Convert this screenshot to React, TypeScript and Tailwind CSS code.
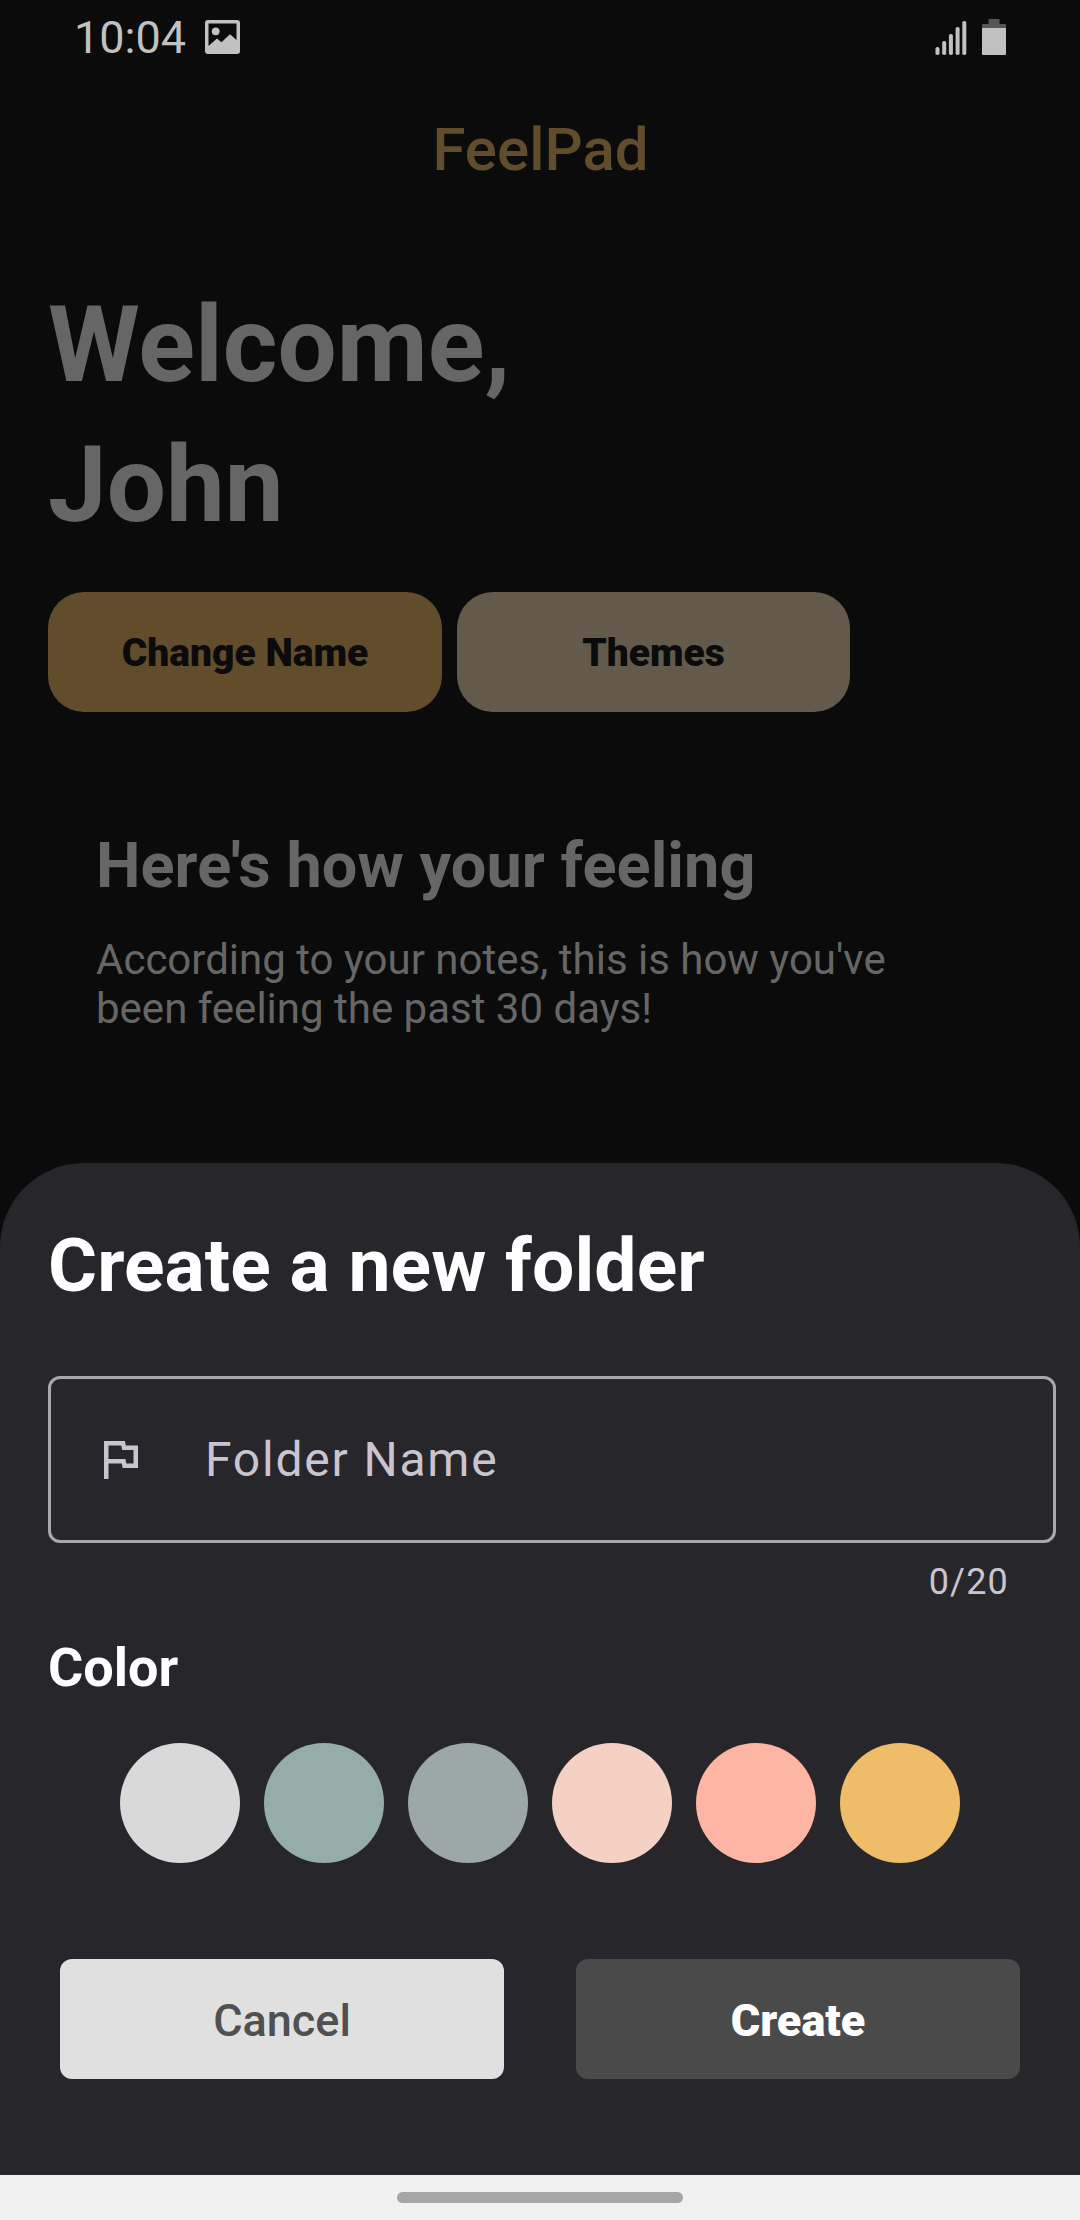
const swatches = [
  "bg-[#d9d9d9]",
  "bg-[#94aea7]",
  "bg-[#9ca7a8]",
  "bg-[#f4d1c3]",
  "bg-[#ffb5a3]",
  "bg-[#efbc68]",
];

function StatusBar() {
  return (
    <header className="flex h-[89px] items-start justify-between pl-[74px] pr-[74px] pt-[11px] text-[#c1c1c1]">
      <div className="flex items-start">
        <span className="text-[45px] leading-[54px]">10:04</span>
        <svg className="ml-[19px] mt-[9px]" width="35" height="34" viewBox="0 0 35 34">
          <path
            fill="currentColor"
            fillRule="evenodd"
            d="M3 0h29q3 0 3 3v28q0 3-3 3H3q-3 0-3-3V3q0-3 3-3zM3.500 3.500V26l8.500-7.500 4.500 3.700L25 14.200l6.500 5.800V3.500z"
          />
          <circle cx="10.700" cy="11.300" r="3.900" fill="currentColor" />
        </svg>
      </div>
      <div className="flex gap-[15px] pt-[8px]">
        <svg width="32" height="36" viewBox="0 0 32 36" fill="currentColor">
          <rect x="0.500" y="28" width="4" height="8" rx="1.800" />
          <rect x="7.200" y="22" width="4" height="14" rx="1.800" />
          <rect x="13.900" y="15" width="4" height="21" rx="1.800" />
          <rect x="20.600" y="8" width="4" height="28" rx="1.800" />
          <rect x="27.300" y="2" width="4" height="34" rx="1.800" />
        </svg>
        <svg width="24" height="36" viewBox="0 0 24 36">
          <path fill="#565656" d="M6.500 0h11v5H23q1 0 1 1v3H0V6q0-1 1-1h5.500z" />
          <path fill="currentColor" d="M0 9h24v26q0 1-1 1H1q-1 0-1-1z" />
        </svg>
      </div>
    </header>
  );
}

function Sheet() {
  return (
    <section className="absolute inset-x-0 bottom-[45px] flex h-[1012px] flex-col rounded-t-[84px] bg-[#27262b] pl-[48px] text-white">
      <h2 className="mt-[57px] text-[75px] font-bold leading-[90px] tracking-[0.080px]">Create a new folder</h2>
      <div className="mr-[24px] mt-[66px] flex h-[167px] shrink-0 items-center rounded-[12px] border-[3px] border-[#a8a8a8] pl-[53px] text-[#cac4d0]">
        <svg width="34" height="38" viewBox="0 0 34 38" fill="none" stroke="currentColor" strokeWidth="4.500">
          <path d="M2.250 38V2.250h16.800l.9 4.500h11.800v18H20.500l-.9-4.500H2.250" />
        </svg>
        <span className="ml-[67px] text-[48px] leading-[56px] tracking-[1.800px]">Folder Name</span>
      </div>
      <p className="mr-[71px] mt-[18px] text-right text-[36px] leading-[42px] tracking-[1.200px] text-[#cac4d0]">0/20</p>
      <h3 className="mt-[33px] text-[54px] font-bold leading-[64px]">Color</h3>
      <div className="ml-[72px] mt-[43px] flex gap-6">
        {swatches.map((color) => (
          <button key={color} className={`size-[120px] rounded-full ${color}`} />
        ))}
      </div>
      <div className="ml-3 mt-24 flex gap-[72px] text-[45px]">
        <button className="h-[120px] w-[444px] rounded-[12px] bg-[#e0e0e0] pt-[3px] font-medium text-[#505050]">Cancel</button>
        <button className="h-[120px] w-[444px] rounded-[12px] bg-[#4a4a4a] pt-[3px] font-black">Create</button>
      </div>
    </section>
  );
}

export default function App() {
  return (
    <div className="relative flex h-[2220px] w-[1080px] flex-col overflow-hidden bg-[#0b0b0b] font-['Roboto',sans-serif]">
      <StatusBar />
      <h1 className="mt-[25px] pl-px text-center text-[60px] font-medium leading-[72px] text-[#614c2b]">FeelPad</h1>
      <main className="px-[48px] pt-[90px] text-[#666666]">
        <h2 className="text-[105px] font-bold leading-[140px]">
          Welcome,
          <br />
          John
        </h2>
        <div className="mt-[36px] flex gap-[15px] text-[39px] font-black text-[#0b0b0b]">
          <button className="h-[120px] w-[394px] rounded-[36px] bg-[#614c2b] pt-[3px]">Change Name</button>
          <button className="h-[120px] w-[393px] rounded-[36px] bg-[#635a4b] pt-[3px]">Themes</button>
        </div>
        <div className="px-[48px] pt-[116px]">
          <h3 className="text-[63px] font-bold leading-[76px] tracking-[0.060px]">Here's how your feeling</h3>
          <p className="mt-[31px] text-[42px] leading-[49px]">
            According to your notes, this is how you've
            <br />
            been feeling the past 30 days!
          </p>
        </div>
      </main>
      <Sheet />
      <nav className="absolute inset-x-0 bottom-0 flex h-[45px] justify-center bg-[#f1f1f1] pt-[17px]">
        <div className="h-[11px] w-[286px] rounded-full bg-[#a6a6a6]" />
      </nav>
    </div>
  );
}
